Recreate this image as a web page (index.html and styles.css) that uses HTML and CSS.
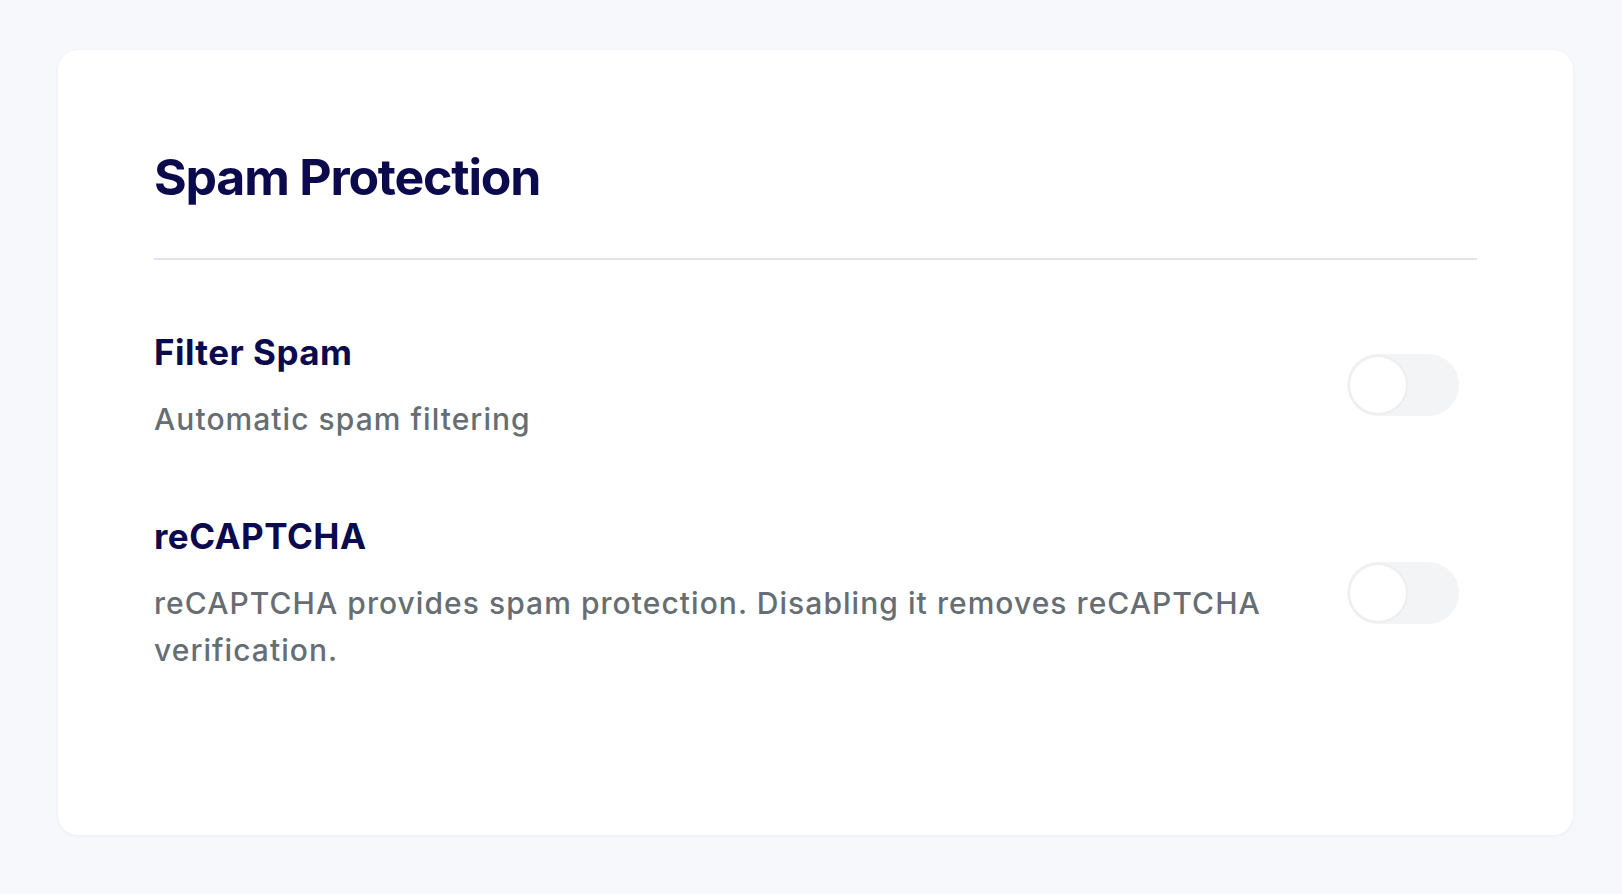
FILE: index.html
```html
<!DOCTYPE html>
<html lang="en">
<head>
<meta charset="utf-8">
<title>Spam Protection</title>
<link rel="stylesheet" href="styles.css">
</head>
<body>
  <main class="card">
    <h1 class="card-title">Spam Protection</h1>
    <div class="divider"></div>
    <section class="setting">
      <div class="setting-text">
        <h2 class="setting-name">Filter Spam</h2>
        <p class="setting-desc">Automatic spam filtering</p>
      </div>
      <button class="toggle" type="button" aria-pressed="false"><span class="knob"></span></button>
    </section>
    <section class="setting">
      <div class="setting-text">
        <h2 class="setting-name">reCAPTCHA</h2>
        <p class="setting-desc">reCAPTCHA provides spam protection. Disabling it removes reCAPTCHA verification.</p>
      </div>
      <button class="toggle" type="button" aria-pressed="false"><span class="knob"></span></button>
    </section>
  </main>
</body>
</html>
```
FILE: styles.css
```css
* { box-sizing: border-box; }

html, body {
  margin: 0;
  padding: 0;
}

body {
  background: #f7f8fc;
  font-family: Inter, "Noto Sans", sans-serif;
  padding: 50px 49px 59px 58px;
  height: 894px;
}

.card {
  background: #ffffff;
  border-radius: 20px;
  box-shadow: 0 1px 4px rgba(20, 24, 80, 0.05);
  height: 785px;
  padding: 97px 96px 96px 96px;
}

.card-title {
  margin: 0;
  font-size: 50px;
  line-height: 60px;
  font-weight: 700;
  color: #0b0a4d;
  letter-spacing: -1.2px;
}

.divider {
  height: 2px;
  background: #e1e2f4;
  margin-top: 51px;
}

.setting {
  display: flex;
  align-items: center;
  gap: 48px;
  margin-top: 66px;
}

.setting-text {
  flex: 1;
  min-width: 0;
}

.setting-name {
  margin: 0;
  font-size: 35px;
  line-height: 52px;
  font-weight: 700;
  color: #0b0a4d;
  letter-spacing: 0.45px;
}

.setting-desc {
  margin: 18px 0 1px;
  font-size: 30px;
  line-height: 47px;
  font-weight: 500;
  color: #666d73;
  letter-spacing: 1.05px;
}

.toggle {
  flex: none;
  width: 112px;
  height: 62px;
  margin-right: 18px;
  padding: 3px;
  border: none;
  border-radius: 31px;
  background: #f3f4f5;
  display: flex;
  align-items: center;
  cursor: pointer;
}

.knob {
  width: 56px;
  height: 56px;
  border-radius: 50%;
  background: #ffffff;
  box-shadow: 0 0 0 2px #eeeeef, 0 1px 3px rgba(0, 0, 0, 0.06);
}
```
